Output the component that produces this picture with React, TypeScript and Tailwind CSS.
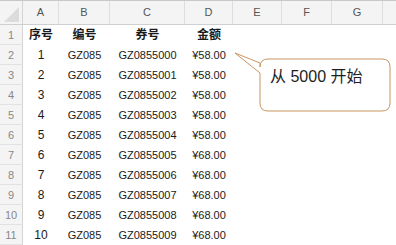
const cols = ['A', 'B', 'C', 'D', 'E', 'F', 'G']

const rows = Array.from({ length: 10 }, (_, i) => ({
  no: String(i + 1),
  code: 'GZ085',
  ticket: `GZ085500${i}`,
  amount: i < 5 ? '¥58.00' : '¥68.00',
}))

const font = { fontFamily: '"Liberation Sans", "Noto Sans CJK SC", sans-serif' }

function Corner() {
  return (
    <div className="h-[23px] bg-[#f4f4f4] border-r border-[#d4d4d4] relative">
      <svg className="absolute right-[3px] bottom-[2px]" width="15" height="15" viewBox="0 0 15 15">
        <polygon points="15,0 15,15 0,15" fill="#dcdcdc" />
      </svg>
    </div>
  )
}

function Callout() {
  return (
    <div className="absolute left-[232px] top-[50px] w-[160px] h-[64px]">
      <svg width="160" height="64" viewBox="0 0 160 64" className="absolute inset-0">
        <path
          d="M3 3 L28 13 L28 17 Q28 9 36 9 L150 9 Q158 9 158 17 L158 53 Q158 61 150 61 L36 61 Q28 61 28 53 L28 23 Z"
          fill="#ffffff"
          stroke="#c9955e"
          strokeWidth="1"
          strokeLinejoin="round"
        />
      </svg>
      <div className="absolute left-[38px] top-[17px] text-[16px] text-[#1e1e1e] leading-[20px] whitespace-nowrap">
        从 5000 开始
      </div>
    </div>
  )
}

export default function App() {
  return (
    <div className="relative w-[396px] h-[245px] bg-white overflow-hidden text-[#1a1a1a]" style={font}>
      <div className="border-t border-[#c8c8c8]">
        {/* column header */}
        <div className="grid grid-cols-[23px_36px_51px_75px_48px_49px_50px_51px_1fr] border-b border-[#cfcfcf] bg-[#f4f4f4]">
          <Corner />
          {cols.map((c) => (
            <div key={c} className="h-[23px] flex items-center justify-center text-[11px] text-[#555] border-r border-[#dedede]">
              {c}
            </div>
          ))}
          <div />
        </div>

        {/* header row */}
        <div className="grid grid-cols-[23px_36px_51px_75px_48px_1fr] h-[20px]">
          <div className="bg-[#f4f4f4] border-r border-[#d4d4d4] border-b border-b-[#e2e2e2] flex items-end justify-center pb-[1px] text-[11px] text-[#888]">
            1
          </div>
          {['序号', '编号', '券号', '金额'].map((h) => (
            <div key={h} className="flex items-center justify-center text-[12px] font-bold">
              {h}
            </div>
          ))}
          <div />
        </div>

        {rows.map((r, i) => (
          <div key={r.no} className="grid grid-cols-[23px_36px_51px_75px_48px_1fr] h-[20px] text-[11px]">
            <div className="bg-[#f4f4f4] border-r border-[#d4d4d4] border-b border-b-[#e2e2e2] flex items-end justify-center pb-[1px] text-[11px] text-[#888]">
              {i + 2}
            </div>
            <div className="flex items-center justify-center text-[12px]">{r.no}</div>
            <div className="flex items-center justify-center">{r.code}</div>
            <div className="flex items-center justify-center">{r.ticket}</div>
            <div className="flex items-center justify-center">{r.amount}</div>
            <div />
          </div>
        ))}
      </div>

      <Callout />
    </div>
  )
}
